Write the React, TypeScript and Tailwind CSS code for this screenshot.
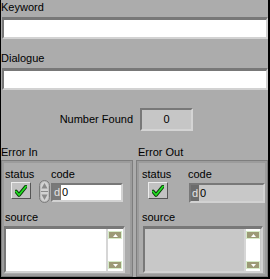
import React from "react";

const sunken = "border-t-[3px] border-l-2 border-b-2 border-r-2 border-t-[#787878] border-l-[#787878] border-b-[#d2d2d2] border-r-[#d2d2d2]";

const Check = () => (
    <svg width="12" height="12" viewBox="0 0 12 12">
        <path d="M1 6.5 L4 10 L11 1.5" fill="none" stroke="#0a3a0a" strokeWidth="3.6" strokeLinecap="round" strokeLinejoin="round" />
        <path d="M1 6.5 L4 10 L11 1.5" fill="none" stroke="#22e022" strokeWidth="1.8" strokeLinecap="round" strokeLinejoin="round" />
    </svg>
);

const StatusButton = () => (
    <div className="w-[20px] h-[17px] bg-[#c2c2c2] border border-t-[#ececec] border-l-[#ececec] border-b-[#555] border-r-[#555] flex items-center justify-center">
        <Check />
    </div>
);

const Spinner = () => (
    <svg width="11" height="23" viewBox="0 0 11 23">
        <rect x="0.5" y="0.5" width="10" height="22" rx="5" fill="#bdbdbd" stroke="#7c7c7c" />
        <rect x="2" y="2" width="7" height="19" rx="3.5" fill="#d2d2d2" />
        <path d="M5.5 3 L8.5 8.5 L2.5 8.5 Z" fill="#8a8a8a" />
        <path d="M5.5 20 L8.5 14.5 L2.5 14.5 Z" fill="#8a8a8a" />
        <line x1="2" y1="11.5" x2="9" y2="11.5" stroke="#8a8a8a" />
    </svg>
);

const ScrollBtn = ({ up }: { up?: boolean }) => (
    <div className="w-[14px] h-[8px] bg-[#9c9a76] border border-[#d6ecc8] flex items-center justify-center">
        <svg width="5" height="3" viewBox="0 0 5 3">
            <path d={up ? "M0 3 L2.5 0 L5 3 Z" : "M0 0 L2.5 3 L5 0 Z"} fill="#fff" />
        </svg>
    </div>
);

const SourceBox = ({ indicator, width }: { indicator?: boolean; width: string }) => (
    <div className={`${width} h-[47px] ${sunken} ${indicator ? "bg-[#c8c8c8]" : "bg-white"} flex justify-end`}>
        <div className="w-[16px] h-full bg-white border-l-2 border-[#d6d6d6] flex flex-col items-center justify-between py-[2px] mr-[1px]">
            <ScrollBtn up />
            <ScrollBtn />
        </div>
    </div>
);

const Cluster = ({ out }: { out?: boolean }) => (
    <div className="w-[132px] h-full border border-[#7e7e7e]">
        <div className="h-full border-2 border-[#9c9c9c] flex flex-col">
            <div className={`flex mt-[5px] h-[12px] ${out ? "pl-[3px]" : "pl-[1px]"}`}>
                <span className={out ? "w-[46px]" : "w-[46px]"}>status</span>
                <span>code</span>
            </div>
            <div className="flex h-[23px]">
                <div className={`mt-[2px] ${out ? "ml-[9px]" : "ml-[7px]"}`}>
                    <StatusButton />
                </div>
                {out ? (
                    <div className="ml-[21px] mt-[3px] w-[77px] h-[20px] flex border-t-2 border-l-2 border-b-2 border-r-2 border-t-[#787878] border-l-[#787878] border-b-[#d2d2d2] border-r-[#d2d2d2]">
                        <span className="w-[8px] bg-[#6c6c6c] text-[#e4e4e4] pl-[1px] leading-[16px]">d</span>
                        <span className="flex-1 bg-[#c8c8c8] pl-[1px] leading-[16px]">0</span>
                    </div>
                ) : (
                    <>
                        <div className="ml-[8px]">
                            <Spinner />
                        </div>
                        <div className="ml-[1px] mt-[3px] w-[72px] h-[19px] flex border-t-2 border-l-2 border-b-2 border-r-2 border-t-[#787878] border-l-[#787878] border-b-[#d2d2d2] border-r-[#d2d2d2]">
                            <span className="w-[8px] bg-[#7a7a7a] text-[#e4e4e4] pl-[1px] leading-[15px]">d</span>
                            <span className="flex-1 bg-white pl-[1px] leading-[15px]">0</span>
                        </div>
                    </>
                )}
            </div>
            <div className={`mt-[8px] h-[13px] ${out ? "pl-[3px]" : "pl-[1px]"}`}>source</div>
            <div className={`mt-[2px] ${out ? "ml-[4px]" : ""}`}>
                <SourceBox indicator={out} width={out ? "w-[120px]" : "w-[121px]"} />
            </div>
        </div>
    </div>
);

export default function App() {
    return (
        <div className="w-[270px] h-[279px] bg-[#acacac] border-l border-r-2 border-b-2 border-black flex flex-col text-[11px] leading-[13px] text-black font-['Liberation_Sans',Arial,sans-serif]">
            <div className="pt-[1px] h-[17px]">Keyword</div>
            <div className={`ml-[1px] h-[22px] bg-white ${sunken}`} />
            <div className="mt-[13px] h-[16px]">Dialogue</div>
            <div className={`ml-[1px] h-[22px] bg-white ${sunken}`} />
            <div className="mt-[18px] h-[23px] flex items-center">
                <span className="w-[132px] text-right">Number Found</span>
                <div className="ml-[7px] w-[53px] h-[23px] bg-[#c6c6c6] border-2 border-t-[#787878] border-l-[#787878] border-b-[#d4d4d4] border-r-[#d4d4d4] flex items-center justify-center">
                    0
                </div>
            </div>
            <div className="mt-[15px] h-[14px] flex">
                <span className="w-[135px]">Error In</span>
                <span className="pl-[2px]">Error Out</span>
            </div>
            <div className="flex-1 flex gap-[3px]">
                <Cluster />
                <Cluster out />
            </div>
        </div>
    );
}
